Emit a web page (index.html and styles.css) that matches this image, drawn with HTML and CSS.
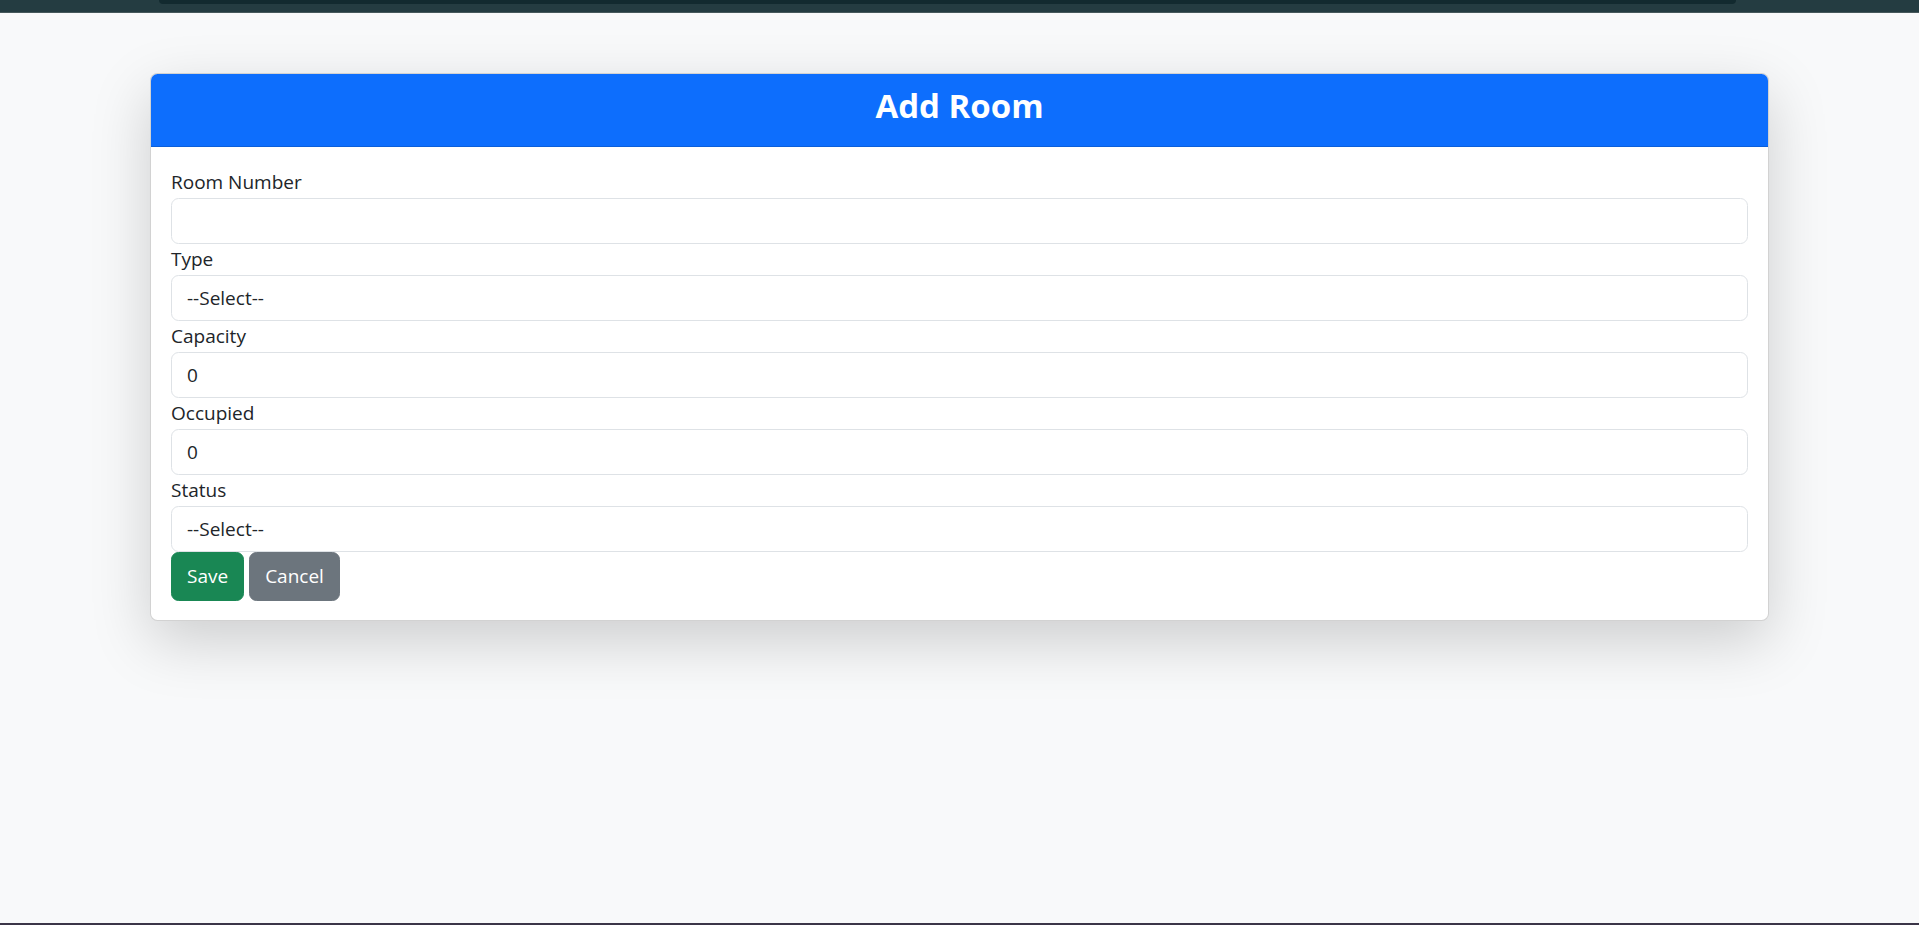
FILE: index.html
```html
<!DOCTYPE html>
<html lang="en">
<head>
<meta charset="utf-8">
<title>Add Room</title>
<link rel="stylesheet" href="styles.css">
</head>
<body>
<div class="page">
  <div class="topbar"><div class="topbar-inner"></div></div>
  <main class="main">
    <div class="card">
      <div class="card-header"><h3 class="title">Add Room</h3></div>
      <form class="card-body">
        <label class="form-label">Room Number</label>
        <input class="form-control" type="text" value="">
        <label class="form-label">Type</label>
        <div class="form-control select">--Select--</div>
        <label class="form-label">Capacity</label>
        <input class="form-control" type="text" value="0">
        <label class="form-label">Occupied</label>
        <input class="form-control" type="text" value="0">
        <label class="form-label">Status</label>
        <div class="form-control select">--Select--</div>
        <div class="actions">
          <button type="button" class="btn btn-success">Save</button>
          <button type="button" class="btn btn-secondary">Cancel</button>
        </div>
      </form>
    </div>
  </main>
  <div class="bottombar"></div>
</div>
</body>
</html>
```

FILE: styles.css
```css
* { box-sizing: border-box; }
html, body { margin: 0; padding: 0; }
body {
  background: #f8f9fa;
  color: #212529;
  font-family: "Open Sans", "Noto Sans", sans-serif;
  font-size: 19px;
  line-height: 30px;
}
.page {
  height: 925px;
  display: flex;
  flex-direction: column;
  overflow: hidden;
}
.topbar {
  height: 13px;
  background: #243c41;
  border-bottom: 1px solid #46585b;
  flex: none;
}
.topbar-inner {
  width: 1577px;
  height: 4px;
  margin-left: 159px;
  background: #122a2f;
  border-radius: 0 0 10px 10px;
}
.main {
  flex: 1;
  padding-top: 60px;
}
.card {
  width: 1619px;
  margin: 0 auto;
  background: #fff;
  border: 1px solid rgba(0,0,0,.175);
  border-radius: 7.5px;
  box-shadow: 0 20px 60px rgba(0,0,0,.175);
  overflow: hidden;
}
.card-header {
  background: #0d6efd;
  color: #fff;
  padding: 11px 20px 9px;
  border-bottom: 1px solid #0b5fd9;
  text-align: center;
}
.title {
  margin: 0 0 10px;
  font-size: 33px;
  line-height: 42px;
  font-weight: 700;
}
.card-body {
  padding: 20px 20px 19px;
  display: flex;
  flex-direction: column;
}
.form-label {
  display: block;
  height: 31px;
  line-height: 31px;
}
.form-control {
  display: block;
  width: 100%;
  height: 46px;
  padding: 7px 15px;
  font: inherit;
  color: #212529;
  line-height: 30px;
  background: #fff;
  border: 1px solid #dee2e6;
  border-radius: 7.5px;
  outline: none;
}
.actions {
  display: flex;
  gap: 5px;
}
.btn {
  font: inherit;
  line-height: 30px;
  padding: 8px 15px 9px;
  border: 1px solid transparent;
  border-radius: 7.5px;
  color: #fff;
  cursor: pointer;
}
.btn-success { background: #198754; border-color: #198754; }
.btn-secondary { background: #6c757d; border-color: #6c757d; }
.bottombar {
  height: 2px;
  background: #3b3548;
  flex: none;
}
```
